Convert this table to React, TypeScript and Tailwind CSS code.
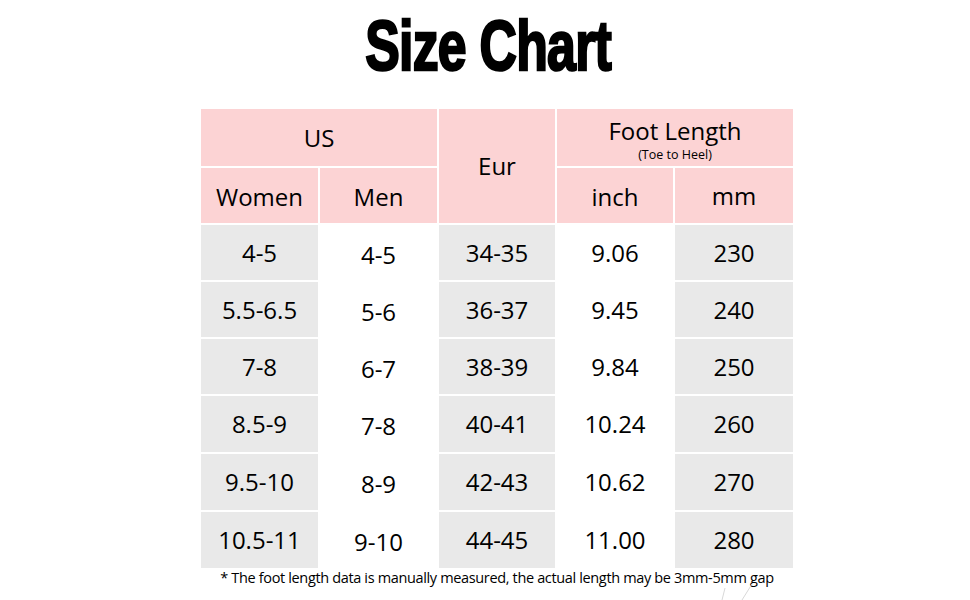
const rows = [
  ['4-5', '4-5', '34-35', '9.06', '230'],
  ['5.5-6.5', '5-6', '36-37', '9.45', '240'],
  ['7-8', '6-7', '38-39', '9.84', '250'],
  ['8.5-9', '7-8', '40-41', '10.24', '260'],
  ['9.5-10', '8-9', '42-43', '10.62', '270'],
  ['10.5-11', '9-10', '44-45', '11.00', '280'],
];

// columns 1, 3 and 5 are shaded, 2 and 4 stay white
const shaded = [true, false, true, false, true];

export default function App() {
  return (
    <div className="relative w-[970px] h-[600px] bg-white flex flex-col items-center font-['Open_Sans',sans-serif] text-black overflow-hidden">
      <h1 className="mt-[10px] h-[72px] ml-[6px] text-[70px] leading-[72px] font-bold tracking-[-1px] scale-x-[0.74] font-['Liberation_Sans',sans-serif] [-webkit-text-stroke:2.5px_black]">
        Size Chart
      </h1>

      <div className="mt-[27px] ml-[24px] grid grid-cols-[117px_117px_116px_116px_118px] grid-rows-[57px_55px_55px_55px_55px_56px_56px_56px] gap-[2px] text-[24px]">
        <div className="col-span-2 bg-[#fcd3d4] flex items-center justify-center">US</div>
        <div className="row-span-2 bg-[#fcd3d4] flex items-center justify-center">Eur</div>
        <div className="col-span-2 bg-[#fcd3d4] flex flex-col items-center justify-center leading-none pt-[5px]">
          <span className="leading-[26px]">Foot Length</span>
          <span className="text-[12.5px] leading-[14px] mt-[4px]">(Toe to Heel)</span>
        </div>
        <div className="bg-[#fcd3d4] flex items-center justify-center pt-[2px]">Women</div>
        <div className="bg-[#fcd3d4] flex items-center justify-center pt-[2px]">Men</div>
        <div className="bg-[#fcd3d4] flex items-center justify-center pt-[2px]">inch</div>
        <div className="bg-[#fcd3d4] flex items-center justify-center">mm</div>

        {rows.map((row) =>
          row.map((v, i) => (
            <div
              key={row[0] + i}
              className={
                (shaded[i] ? 'bg-[#e9e9e9] ' : '') +
                (i === 1 ? 'pt-[4px] ' : '') +
                'flex items-center justify-center'
              }
            >
              {v}
            </div>
          ))
        )}
      </div>

      <p className="mt-[0px] ml-[24px] text-[14.5px] leading-[20px] tracking-[-0.35px]">
        * The foot length data is manually measured, the actual length may be 3mm-5mm gap
      </p>

      <svg className="absolute left-[712px] top-[582px]" width="50" height="18" viewBox="0 0 50 18">
        <path d="M10 18 L13 6" stroke="#d8d8d8" strokeWidth="1" fill="none" />
        <path d="M30 18 L40 2" stroke="#d8d8d8" strokeWidth="1" fill="none" />
      </svg>
    </div>
  );
}
